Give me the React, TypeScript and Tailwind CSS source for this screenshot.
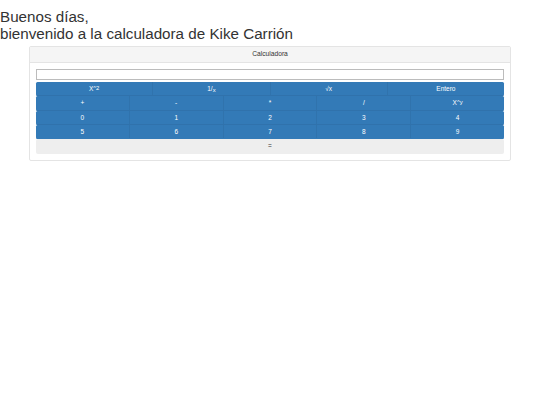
import React, { useState } from 'react';

interface Key {
  id: string;
  label: React.ReactNode;
}

const functionKeys: Key[] = [
  { id: 'square', label: <>X<sup className="top-[-0.15em] text-[90%]">^2</sup></> },
  { id: 'inverse', label: <>1/<sub className="text-[90%]">x</sub></> },
  { id: 'sqrt', label: '√x' },
  { id: 'int', label: 'Entero' },
];

const operatorKeys: Key[] = [
  { id: '+', label: '+' },
  { id: '-', label: '-' },
  { id: '*', label: '*' },
  { id: '/', label: '/' },
  { id: 'pow', label: <>X<sup className="top-[-0.15em] text-[90%]">^y</sup></> },
];

const toKeys = (digits: string): Key[] => digits.split('').map((d) => ({ id: d, label: d }));

const rows: Key[][] = [functionKeys, operatorKeys, toKeys('01234'), toKeys('56789')];

interface KeyRowProps {
  keys: Key[];
  onPress: (id: string) => void;
}

const KeyRow: React.FC<KeyRowProps> = ({ keys, onPress }) => (
  <div className="flex h-[14.35px] overflow-hidden rounded-[1.5px] border-b border-[#3072ac] bg-[#337ab7] last-of-type:border-[#337ab7]">
    {keys.map((key) => (
      <button
        key={key.id}
        type="button"
        onClick={() => onPress(key.id)}
        className="flex-1 border-l border-[#3073ad] pt-px text-center leading-none text-white first:border-l-0 hover:bg-[#286090]"
      >
        {key.label}
      </button>
    ))}
  </div>
);

export default function App() {
  const [display, setDisplay] = useState('');
  const [pending, setPending] = useState<{ op: string; value: number } | null>(null);

  const handlePress = (id: string) => {
    const value = Number(display);
    if (/^\d$/.test(id)) setDisplay(display + id);
    else if (id === 'square') setDisplay(String(value * value));
    else if (id === 'inverse') setDisplay(String(1 / value));
    else if (id === 'sqrt') setDisplay(String(Math.sqrt(value)));
    else if (id === 'int') setDisplay(String(Math.trunc(value)));
    else {
      setPending({ op: id, value });
      setDisplay('');
    }
  };

  const handleEquals = () => {
    if (!pending) return;
    const a = pending.value;
    const b = Number(display);
    const results: Record<string, number> = { '+': a + b, '-': a - b, '*': a * b, '/': a / b, pow: a ** b };
    setDisplay(String(results[pending.op]));
    setPending(null);
  };

  return (
    <div className="min-h-screen bg-white pt-[9px] font-['Liberation_Sans',Arial,sans-serif] text-[6.5px] text-[#333]">
      <h1 className="text-[15.2px] leading-[16.8px]">
        Buenos días,
        <br />
        bienvenido a la calculadora de Kike Carrión
      </h1>

      <div className="mx-[29px] mt-[3.4px] rounded-[2px] border border-[#e4e4e4]">
        <div className="flex h-4 items-center justify-center border-b border-[#e4e4e4] bg-[#f5f5f5] text-[6.7px]">
          Calculadora
        </div>
        <div className="px-1.5 pt-1.5 pb-1.5">
          <input
            type="text"
            value={display}
            onChange={(e) => setDisplay(e.target.value)}
            className="block h-[11px] w-full border border-[#bcbcbc] px-0.5 text-right outline-none"
          />
          <div className="mt-[2px]">
            {rows.map((keys, i) => (
              <KeyRow key={i} keys={keys} onPress={handlePress} />
            ))}
            <button
              type="button"
              onClick={handleEquals}
              className="block h-[14.6px] w-full rounded-[2px] bg-[#eee] text-center leading-none"
            >
              =
            </button>
          </div>
        </div>
      </div>
    </div>
  );
}
